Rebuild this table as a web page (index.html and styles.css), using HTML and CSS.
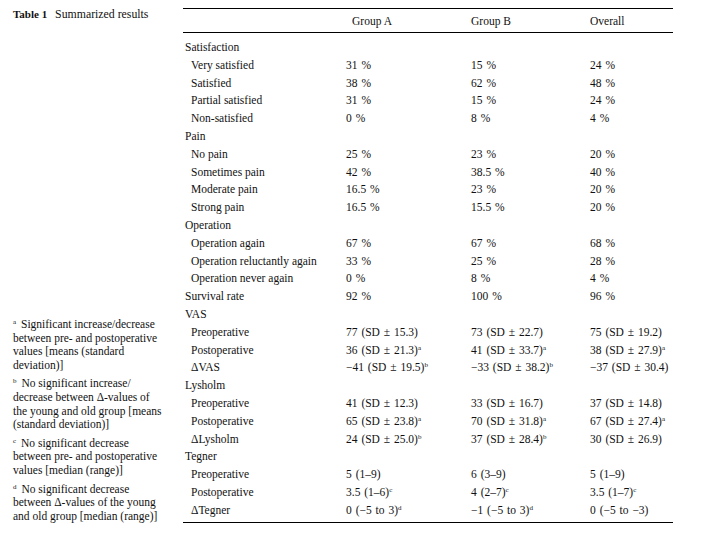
FILE: index.html
```html
<!DOCTYPE html>
<html>
<head>
<meta charset="utf-8">
<link rel="stylesheet" href="styles.css">
</head>
<body>
<div class="page">
  <aside class="side">
    <div class="caption"><span class="cap-num">Table 1</span> Summarized results</div>
    <div class="notes">
      <p class="note"><span class="nsup">a</span> Significant increase/decrease<br>between pre- and postoperative<br>values [means (standard<br>deviation)]</p>
      <p class="note"><span class="nsup">b</span> No significant increase/<br>decrease between Δ-values of<br>the young and old group [means<br>(standard deviation)]</p>
      <p class="note"><span class="nsup">c</span> No significant decrease<br>between pre- and postoperative<br>values [median (range)]</p>
      <p class="note"><span class="nsup">d</span> No significant decrease<br>between Δ-values of the young<br>and old group [median (range)]</p>
    </div>
  </aside>
  <table class="results">
    <colgroup><col class="c-label"><col class="c-a"><col class="c-b"><col class="c-o"></colgroup>
    <thead>
      <tr><th></th><th class="h-a">Group A</th><th>Group B</th><th>Overall</th></tr>
    </thead>
    <tbody>
      <tr class="first"><td class="sec">Satisfaction</td><td></td><td></td><td></td></tr>
      <tr><td class="sub">Very satisfied</td><td>31 %</td><td>15 %</td><td>24 %</td></tr>
      <tr><td class="sub">Satisfied</td><td>38 %</td><td>62 %</td><td>48 %</td></tr>
      <tr><td class="sub">Partial satisfied</td><td>31 %</td><td>15 %</td><td>24 %</td></tr>
      <tr><td class="sub">Non-satisfied</td><td>0 %</td><td>8 %</td><td>4 %</td></tr>
      <tr><td class="sec">Pain</td><td></td><td></td><td></td></tr>
      <tr><td class="sub">No pain</td><td>25 %</td><td>23 %</td><td>20 %</td></tr>
      <tr><td class="sub">Sometimes pain</td><td>42 %</td><td>38.5 %</td><td>40 %</td></tr>
      <tr><td class="sub">Moderate pain</td><td>16.5 %</td><td>23 %</td><td>20 %</td></tr>
      <tr><td class="sub">Strong pain</td><td>16.5 %</td><td>15.5 %</td><td>20 %</td></tr>
      <tr><td class="sec">Operation</td><td></td><td></td><td></td></tr>
      <tr><td class="sub">Operation again</td><td>67 %</td><td>67 %</td><td>68 %</td></tr>
      <tr><td class="sub">Operation reluctantly again</td><td>33 %</td><td>25 %</td><td>28 %</td></tr>
      <tr><td class="sub">Operation never again</td><td>0 %</td><td>8 %</td><td>4 %</td></tr>
      <tr><td class="sec">Survival rate</td><td>92 %</td><td>100 %</td><td>96 %</td></tr>
      <tr><td class="sec">VAS</td><td></td><td></td><td></td></tr>
      <tr><td class="sub">Preoperative</td><td>77 (SD ± 15.3)</td><td>73 (SD ± 22.7)</td><td>75 (SD ± 19.2)</td></tr>
      <tr><td class="sub">Postoperative</td><td>36 (SD ± 21.3)<span class="sup">a</span></td><td>41 (SD ± 33.7)<span class="sup">a</span></td><td>38 (SD ± 27.9)<span class="sup">a</span></td></tr>
      <tr><td class="sub">ΔVAS</td><td>−41 (SD ± 19.5)<span class="sup">b</span></td><td>−33 (SD ± 38.2)<span class="sup">b</span></td><td>−37 (SD ± 30.4)</td></tr>
      <tr><td class="sec">Lysholm</td><td></td><td></td><td></td></tr>
      <tr><td class="sub">Preoperative</td><td>41 (SD ± 12.3)</td><td>33 (SD ± 16.7)</td><td>37 (SD ± 14.8)</td></tr>
      <tr><td class="sub">Postoperative</td><td>65 (SD ± 23.8)<span class="sup">a</span></td><td>70 (SD ± 31.8)<span class="sup">a</span></td><td>67 (SD ± 27.4)<span class="sup">a</span></td></tr>
      <tr><td class="sub">ΔLysholm</td><td>24 (SD ± 25.0)<span class="sup">b</span></td><td>37 (SD ± 28.4)<span class="sup">b</span></td><td>30 (SD ± 26.9)</td></tr>
      <tr><td class="sec">Tegner</td><td></td><td></td><td></td></tr>
      <tr><td class="sub">Preoperative</td><td>5 (1–9)</td><td>6 (3–9)</td><td>5 (1–9)</td></tr>
      <tr><td class="sub">Postoperative</td><td>3.5 (1–6)<span class="sup">c</span></td><td>4 (2–7)<span class="sup">c</span></td><td>3.5 (1–7)<span class="sup">c</span></td></tr>
      <tr class="last"><td class="sub">ΔTegner</td><td>0 (−5 to 3)<span class="sup">d</span></td><td>−1 (−5 to 3)<span class="sup">d</span></td><td>0 (−5 to −3)</td></tr>
    </tbody>
  </table>
</div>
</body>
</html>
```
FILE: styles.css
```css
html, body {
  margin: 0;
  padding: 0;
  background: #ffffff;
}
body {
  font-family: "Liberation Serif", "Times New Roman", serif;
  color: #111111;
  font-size: 11.5px;
}
.page {
  display: flex;
  width: 720px;
  height: 540px;
}
.side {
  width: 183px;
  box-sizing: border-box;
  padding-left: 13px;
  display: flex;
  flex-direction: column;
}
.caption {
  margin-top: 8px;
  line-height: 13px;
  font-size: 11.8px;
  white-space: nowrap;
}
.cap-num {
  font-weight: bold;
  font-size: 11px;
  margin-right: 5px;
}
.notes {
  margin-top: 297px;
}
.note {
  margin: 0 0 5px 0;
  font-size: 11.5px;
  line-height: 13.6px;
  white-space: nowrap;
}
.nsup {
  font-size: 7px;
  line-height: 0;
  vertical-align: 4px;
  margin-right: 2px;
}
.results {
  margin-top: 8px;
  width: 490px;
  align-self: flex-start;
  border-collapse: separate;
  border-spacing: 0;
  table-layout: fixed;
}
.c-label { width: 163px; }
.c-a { width: 125px; }
.c-b { width: 119px; }
.c-o { width: 83px; }
.results thead th {
  font-weight: normal;
  text-align: left;
  padding: 6px 0 4px 0;
  line-height: 13px;
  border-top: 1px solid #000;
  border-bottom: 1px solid #000;
}
.results th.h-a {
  padding-left: 6px;
}
.results td {
  padding: 0;
  height: 17.8px;
  line-height: 17.8px;
  white-space: nowrap;
  vertical-align: middle;
  word-spacing: 1px;
}
.results td.sec {
  padding-left: 2px;
  word-spacing: 0;
}
.results td.sub {
  padding-left: 8px;
  word-spacing: 0;
}
.results tr.first td {
  padding-top: 6px;
}
.results tr.last td {
  padding-bottom: 2px;
  border-bottom: 1px solid #000;
}
.sup {
  font-size: 7px;
  line-height: 0;
  vertical-align: 4px;
}
```
